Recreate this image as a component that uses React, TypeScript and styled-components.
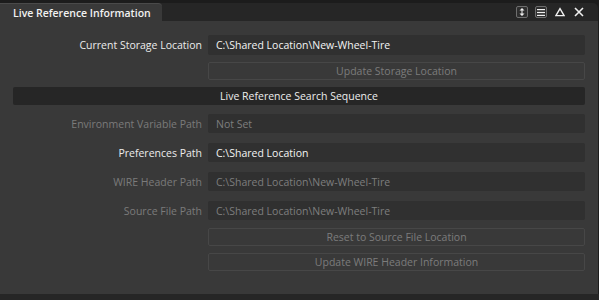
import styled, { createGlobalStyle } from "styled-components"

const GlobalStyle = createGlobalStyle`
  html, body {
    margin: 0;
    padding: 0;
    background: #1c1c1c;
  }
  body {
    font-family: "Open Sans", "Noto Sans", Arial, sans-serif;
    font-size: 10.5px;
  }
`

const Window = styled.div`
  width: 599px;
  height: 300px;
  display: flex;
  flex-direction: column;
  background: #1c1c1c;
  overflow: hidden;
`

const TitleBar = styled.div`
  height: 18px;
  margin-top: 3px;
  display: flex;
  justify-content: space-between;
  align-items: stretch;
  background: #262626;
  border-top-right-radius: 5px;
  margin-right: 1px;
`

const Tab = styled.div`
  box-sizing: border-box;
  width: 162px;
  display: flex;
  align-items: center;
  padding: 0 0 0 13px;
  background: #393939;
  border-top: 1px solid #4a4a4a;
  border-top-right-radius: 4px;
  color: #f2f2f2;
  font-weight: 600;
  font-size: 10.5px;
  white-space: nowrap;
`

const Tools = styled.div`
  display: flex;
  align-items: center;
  gap: 7px;
  padding-right: 13px;
`

const IconBox = styled.div<{ $boxed?: boolean }>`
  box-sizing: border-box;
  width: 12px;
  height: 12px;
  display: flex;
  align-items: center;
  justify-content: center;
  border: 1px solid ${p => (p.$boxed ? "#6e6e6e" : "transparent")};
  border-radius: 2px;
  background: ${p => (p.$boxed ? "#2e2e2e" : "transparent")};
`

const Body = styled.div`
  flex: 1;
  background: #393939;
  padding: 14px 13px 0;
  display: flex;
  flex-direction: column;
  margin-right: 1px;
`

const Footer = styled.div`
  height: 6px;
  background: #262626;
`

const Row = styled.div<{ $gap: number }>`
  display: grid;
  grid-template-columns: 189px 1fr;
  column-gap: 6px;
  margin-bottom: ${p => p.$gap}px;
`

const Label = styled.div<{ $dim?: boolean }>`
  text-align: right;
  align-self: center;
  color: ${p => (p.$dim ? "#7b7b7b" : "#ececec")};
  white-space: nowrap;
`

const Field = styled.div<{ $dim?: boolean; $h: number }>`
  height: ${p => p.$h}px;
  background: #303030;
  border-radius: 2px;
  padding-left: 8px;
  display: flex;
  align-items: center;
  color: ${p => (p.$dim ? "#7e7e7e" : "#f4f4f4")};
  white-space: nowrap;
`

const Button = styled.div`
  grid-column: 2;
  height: 16px;
  border: 1px solid #474747;
  border-radius: 2px;
  display: flex;
  align-items: center;
  justify-content: center;
  color: #7c7c7c;
`

const SectionHeader = styled.div`
  height: 18px;
  background: #262626;
  border-radius: 2px;
  display: flex;
  align-items: center;
  justify-content: center;
  color: #ededed;
  margin-bottom: 9px;
`

const fields = [
  { label: "Environment Variable Path", value: "Not Set", dim: true, gap: 10 },
  { label: "Preferences Path", value: "C:\\Shared Location", dim: false, gap: 10 },
  { label: "WIRE Header Path", value: "C:\\Shared Location\\New-Wheel-Tire", dim: true, gap: 10 },
  { label: "Source File Path", value: "C:\\Shared Location\\New-Wheel-Tire", dim: true, gap: 8 },
]

const SizeIcon = () => (
  <svg width="6" height="8" viewBox="0 0 6 8">
    <path d="M3 0 L5.5 2.5 H0.5 Z M3 8 L5.5 5.5 H0.5 Z" fill="#f0f0f0" />
    <rect x="2.5" y="2" width="1" height="4" fill="#f0f0f0" />
  </svg>
)

const MenuIcon = () => (
  <svg width="8" height="7" viewBox="0 0 8 7">
    <rect x="0" y="0" width="8" height="1.2" fill="#f0f0f0" />
    <rect x="0" y="2.9" width="8" height="1.2" fill="#f0f0f0" />
    <rect x="0" y="5.8" width="8" height="1.2" fill="#f0f0f0" />
  </svg>
)

const TriangleIcon = () => (
  <svg width="11" height="10" viewBox="0 0 11 10">
    <path d="M5.5 1.2 L10 9 H1 Z" fill="none" stroke="#f0f0f0" strokeWidth="1.5" strokeLinejoin="miter" />
  </svg>
)

const CloseIcon = () => (
  <svg width="10" height="10" viewBox="0 0 10 10">
    <path d="M1 1 L9 9 M9 1 L1 9" stroke="#f0f0f0" strokeWidth="1.6" />
  </svg>
)

export default function App() {
  return (
    <Window>
      <GlobalStyle />
      <TitleBar>
        <Tab>Live Reference Information</Tab>
        <Tools>
          <IconBox $boxed>
            <SizeIcon />
          </IconBox>
          <IconBox $boxed>
            <MenuIcon />
          </IconBox>
          <IconBox>
            <TriangleIcon />
          </IconBox>
          <IconBox>
            <CloseIcon />
          </IconBox>
        </Tools>
      </TitleBar>
      <Body>
        <Row $gap={7}>
          <Label>Current Storage Location</Label>
          <Field $h={20}>C:\Shared Location\New-Wheel-Tire</Field>
        </Row>
        <Row $gap={7}>
          <Button>Update Storage Location</Button>
        </Row>
        <SectionHeader>Live Reference Search Sequence</SectionHeader>
        {fields.map(f => (
          <Row key={f.label} $gap={f.gap}>
            <Label $dim={f.dim}>{f.label}</Label>
            <Field $h={19} $dim={f.dim}>
              {f.value}
            </Field>
          </Row>
        ))}
        <Row $gap={7}>
          <Button>Reset to Source File Location</Button>
        </Row>
        <Row $gap={0}>
          <Button>Update WIRE Header Information</Button>
        </Row>
      </Body>
      <Footer />
    </Window>
  )
}
